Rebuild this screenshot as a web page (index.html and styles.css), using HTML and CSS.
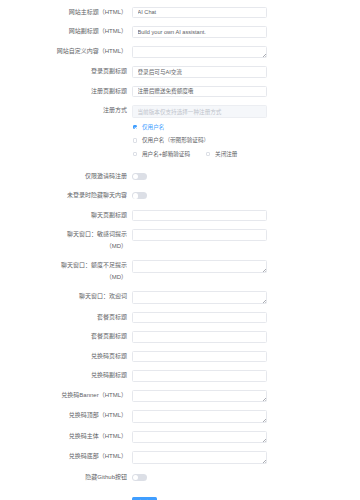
FILE: index.html
```html
<!DOCTYPE html>
<html lang="zh-CN">
<head>
    <meta charset="UTF-8">
    <meta name="viewport" content="width=device-width, initial-scale=1.0">
    <title>站点设置</title>
    <link rel="stylesheet" href="styles.css">
</head>
<body>

<form class="settings">
    <!-- 网站信息 -->
    <div class="row">
        <label class="row-label">网站主标题（HTML）</label>
        <div class="row-field"><input class="text-input" type="text" value="AI Chat"></div>
    </div>
    <div class="row">
        <label class="row-label">网站副标题（HTML）</label>
        <div class="row-field"><input class="text-input" type="text" value="Build your own AI assistant."></div>
    </div>
    <div class="row">
        <label class="row-label">网站自定义内容（HTML）</label>
        <div class="row-field"><div class="area"><textarea class="text-area"></textarea></div></div>
    </div>
    <div class="row">
        <label class="row-label">登录页副标题</label>
        <div class="row-field"><input class="text-input" type="text" value="登录后可与AI交流"></div>
    </div>
    <div class="row">
        <label class="row-label">注册页副标题</label>
        <div class="row-field"><input class="text-input" type="text" value="注册后赠送免费额度哦"></div>
    </div>

    <!-- 注册方式 -->
    <div class="row">
        <label class="row-label">注册方式</label>
        <div class="row-field">
            <input class="text-input tip-input" type="text" disabled placeholder="当前版本仅支持选择一种注册方式">
            <div class="choices">
                <div class="choice-line">
                    <span class="choice is-checked"><span class="box"></span>仅用户名</span>
                </div>
                <div class="choice-line">
                    <span class="choice"><span class="box"></span>仅用户名（带图形验证码）</span>
                </div>
                <div class="choice-line">
                    <span class="choice"><span class="box"></span>用户名+邮箱验证码</span>
                    <span class="choice"><span class="box"></span>关闭注册</span>
                </div>
            </div>
        </div>
    </div>

    <div class="row">
        <label class="row-label">仅限邀请码注册</label>
        <div class="row-field"><span class="switch"></span></div>
    </div>
    <div class="row">
        <label class="row-label">未登录时隐藏聊天内容</label>
        <div class="row-field"><span class="switch"></span></div>
    </div>

    <!-- 聊天页 -->
    <div class="row">
        <label class="row-label">聊天页副标题</label>
        <div class="row-field"><input class="text-input" type="text"></div>
    </div>
    <div class="row">
        <label class="row-label">聊天窗口：敏感词提示（MD）</label>
        <div class="row-field"><input class="text-input" type="text"></div>
    </div>
    <div class="row">
        <label class="row-label">聊天窗口：额度不足提示（MD）</label>
        <div class="row-field"><div class="area"><textarea class="text-area"></textarea></div></div>
    </div>
    <div class="row">
        <label class="row-label">聊天窗口：欢迎词</label>
        <div class="row-field"><div class="area"><textarea class="text-area"></textarea></div></div>
    </div>

    <!-- 套餐 / 兑换码 -->
    <div class="row">
        <label class="row-label">套餐页标题</label>
        <div class="row-field"><input class="text-input" type="text"></div>
    </div>
    <div class="row">
        <label class="row-label">套餐页副标题</label>
        <div class="row-field"><input class="text-input" type="text"></div>
    </div>
    <div class="row">
        <label class="row-label">兑换码页标题</label>
        <div class="row-field"><input class="text-input" type="text"></div>
    </div>
    <div class="row">
        <label class="row-label">兑换码副标题</label>
        <div class="row-field"><input class="text-input" type="text"></div>
    </div>
    <div class="row">
        <label class="row-label">兑换码Banner（HTML）</label>
        <div class="row-field"><div class="area"><textarea class="text-area"></textarea></div></div>
    </div>
    <div class="row">
        <label class="row-label">兑换码顶部（HTML）</label>
        <div class="row-field"><div class="area"><textarea class="text-area"></textarea></div></div>
    </div>
    <div class="row">
        <label class="row-label">兑换码主体（HTML）</label>
        <div class="row-field"><div class="area"><textarea class="text-area"></textarea></div></div>
    </div>
    <div class="row">
        <label class="row-label">兑换码底部（HTML）</label>
        <div class="row-field"><div class="area"><textarea class="text-area"></textarea></div></div>
    </div>
    <div class="row">
        <label class="row-label">隐藏Github按钮</label>
        <div class="row-field"><span class="switch"></span></div>
    </div>

    <div class="actions">
        <button type="button" class="submit">提交</button>
    </div>
</form>

</body>
</html>
```

FILE: styles.css
```css
body {
    margin: 0;
    background-color: #fff;
    font-family: "Liberation Sans", "Noto Sans CJK SC", sans-serif;
    color: #606266;
}
.settings {
    padding: 6.5px 0 20px 53px;
}
.row {
    display: flex;
    align-items: flex-start;
    margin-bottom: 8px;
}
.row-label {
    flex-shrink: 0;
    width: 74px;
    padding-right: 5px;
    text-align: right;
    font-size: 6px;
    line-height: 11.5px;
    color: #606266;
}
.row-field {
    width: 135px;
}
.text-input, .text-area {
    display: block;
    box-sizing: border-box;
    width: 100%;
    margin: 0;
    padding: 0 4.5px;
    border: 1px solid #e6e8ed;
    border-radius: 1.5px;
    background-color: #fff;
    font-family: "Liberation Sans", "Noto Sans CJK SC", sans-serif;
    font-size: 5.6px;
    color: #606266;
    outline: none;
}
.text-input {
    height: 11.5px;
}
.text-area {
    height: 12.5px;
    padding-top: 2px;
    resize: none;
}
.tip-input {
    height: 13px;
    background-color: #f5f7fa;
    border-color: #eceef2;
}
.tip-input::placeholder {
    color: #c0c4cc;
}
.area {
    position: relative;
}
/* tiny resize grip */
.area::after {
    content: "";
    position: absolute;
    right: 1px;
    bottom: 1px;
    width: 3px;
    height: 3px;
    background: linear-gradient(135deg, transparent 45%, #a8abb2 50%, transparent 60%, transparent 75%, #a8abb2 80%, transparent 90%);
}
.choices {
    padding: 2px 0;
}
.choice-line {
    display: flex;
    align-items: center;
    height: 13.5px;
}
.choice {
    display: flex;
    align-items: center;
    margin-right: 15px;
    font-size: 5.6px;
    color: #606266;
}
.box {
    position: relative;
    box-sizing: border-box;
    width: 4.5px;
    height: 4.5px;
    margin: 0 5px 0 0.5px;
    border: 0.5px solid #dcdfe6;
    border-radius: 1px;
    background-color: #fff;
}
.choice.is-checked {
    color: #409eff;
}
.choice.is-checked .box {
    background-color: #409eff;
    border-color: #409eff;
}
.choice.is-checked .box::after {
    content: "";
    position: absolute;
    left: 1.3px;
    top: 0.3px;
    width: 0.9px;
    height: 2px;
    border: solid #fff;
    border-width: 0 0.6px 0.6px 0;
    transform: rotate(45deg);
}
.switch {
    position: relative;
    display: block;
    width: 15px;
    height: 7px;
    margin-top: 2.25px;
    border-radius: 3.5px;
    background-color: #dcdfe6;
}
.switch::after {
    content: "";
    position: absolute;
    left: 0.75px;
    top: 0.75px;
    width: 5.5px;
    height: 5.5px;
    border-radius: 50%;
    background-color: #fff;
}
.actions {
    padding-left: 79px;
}
.submit {
    height: 11.5px;
    padding: 0 7px;
    border: none;
    border-radius: 1.5px;
    background-color: #409eff;
    color: #fff;
    font-family: "Liberation Sans", "Noto Sans CJK SC", sans-serif;
    font-size: 5.6px;
    cursor: pointer;
}
```
